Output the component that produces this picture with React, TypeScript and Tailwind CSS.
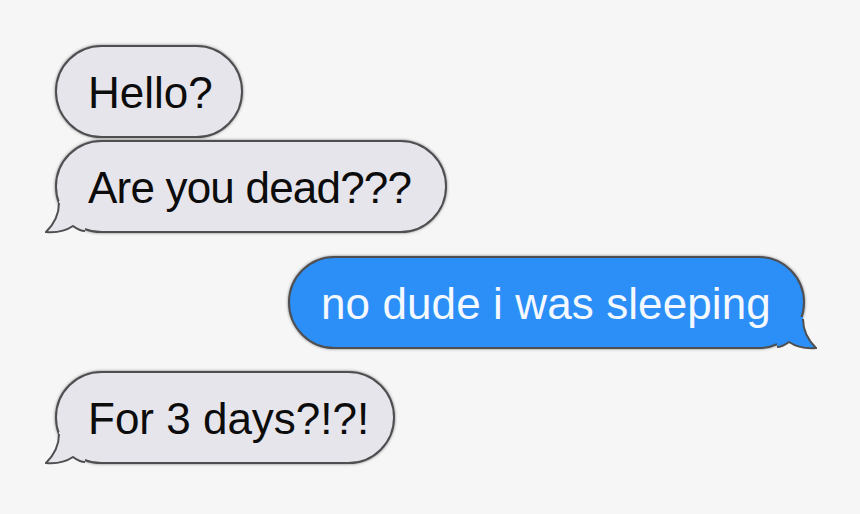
import type { ReactNode } from "react";

type Side = "left" | "right";

function Tail({ side, fill }: { side: Side; fill: string }) {
  // little curl at the bottom corner of the bubble
  const flip = side === "right";
  return (
    <svg
      width="40"
      height="34"
      viewBox="0 0 40 34"
      className={`absolute bottom-[-4px] ${flip ? "right-[-14px] -scale-x-100" : "left-[-12px]"}`}
    >
      <path d="M14 0 C14 14 8 24 1 31 C12 32 22 29 28 25 C32 28 36 30 40 30 L40 0 Z" fill={fill} />
      <path
        d="M14 2 C14 14 8 24 1 31 C12 32 22 29 28 25 C32 28 36 30 40 30"
        fill="none"
        stroke="#4f4f52"
        strokeWidth="2"
        style={{ filter: "blur(0.6px)" }}
      />
    </svg>
  );
}

function Bubble({
  side,
  width,
  tail,
  track,
  children,
  className = "",
}: {
  side: Side;
  width: string;
  track: string;
  tail?: boolean;
  children: ReactNode;
  className?: string;
}) {
  const blue = side === "right";
  return (
    <div
      className={`relative flex h-[93px] items-center rounded-[47px] border-2 border-[#4f4f52] shadow-[0_0_3px_rgba(0,0,0,0.5)] ${width} ${
        blue ? "self-end bg-[#2b8ff7] pl-[31px] text-[#f4f8ff]" : "bg-[#e6e5eb] pl-[31px] text-[#0c0c0c]"
      } ${className}`}
    >
      {tail && <Tail side={side} fill={blue ? "#2b8ff7" : "#e6e5eb"} />}
      <span className={`relative mt-[2px] whitespace-nowrap text-[44px] leading-none ${track}`}>{children}</span>
    </div>
  );
}

export default function App() {
  return (
    <div
      className="flex h-[514px] w-[860px] flex-col bg-[#f6f6f6] px-[55px] pt-[45px]"
      style={{ fontFamily: '"Liberation Sans", Arial, sans-serif' }}
    >
      <Bubble side="left" width="w-[188px]" track="tracking-[0px]">
        Hello?
      </Bubble>
      <Bubble side="left" width="w-[392px]" tail track="tracking-[-0.8px]" className="mt-[2px]">
        Are you dead???
      </Bubble>
      <Bubble side="right" width="w-[517px]" tail track="tracking-[0.1px]" className="mt-[23px]">
        no dude i was sleeping
      </Bubble>
      <Bubble side="left" width="w-[340px]" tail track="tracking-[0px]" className="mt-[22px]">
        For 3 days?!?!
      </Bubble>
    </div>
  );
}
